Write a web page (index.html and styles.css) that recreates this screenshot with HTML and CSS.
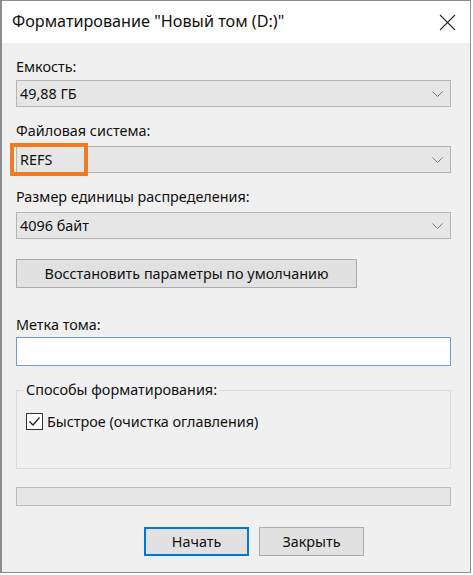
FILE: index.html
```html
<!DOCTYPE html>
<html lang="ru">
<head>
<meta charset="utf-8">
<title>Форматирование</title>
<link rel="stylesheet" href="styles.css">
</head>
<body>
<div class="window">
  <div class="titlebar">
    <span class="title">Форматирование "Новый том (D:)"</span>
    <svg class="close" width="17" height="17" viewBox="0 0 17 17"><path d="M1 1 L16 16 M16 1 L1 16" stroke="#2b2b2b" stroke-width="1.1" fill="none"/></svg>
  </div>
  <div class="content">
    <div class="label l1">Емкость:</div>
    <div class="combo c1"><span>49,88 ГБ</span><svg class="chev" width="11" height="6" viewBox="0 0 11 6"><path d="M0.5 0.5 L5.5 5.5 L10.5 0.5" stroke="#7a7a7a" fill="none"/></svg></div>

    <div class="label l2">Файловая система:</div>
    <div class="combo c2"><span>REFS</span><svg class="chev" width="11" height="6" viewBox="0 0 11 6"><path d="M0.5 0.5 L5.5 5.5 L10.5 0.5" stroke="#7a7a7a" fill="none"/></svg><div class="highlight"></div></div>

    <div class="label l2">Размер единицы распределения:</div>
    <div class="combo c2"><span>4096 байт</span><svg class="chev" width="11" height="6" viewBox="0 0 11 6"><path d="M0.5 0.5 L5.5 5.5 L10.5 0.5" stroke="#7a7a7a" fill="none"/></svg></div>

    <div class="btn restore">Восстановить параметры по умолчанию</div>

    <div class="label l4">Метка тома:</div>
    <div class="input"></div>

    <fieldset class="group">
      <legend>Способы форматирования:</legend>
      <div class="check-row">
        <span class="checkbox"><svg width="15" height="15" viewBox="0 0 15 15"><path d="M2.5 7.5 L6 11 L12.5 3.5" stroke="#222" stroke-width="1.3" fill="none"/></svg></span>
        <span>Быстрое (очистка оглавления)</span>
      </div>
    </fieldset>

    <div class="progress"></div>

    <div class="actions">
      <div class="btn action primary">Начать</div>
      <div class="btn action">Закрыть</div>
    </div>
  </div>
</div>
</body>
</html>
```
FILE: styles.css
```css
html, body {
  margin: 0;
  padding: 0;
  background: #ffffff;
}
body {
  font-family: "Noto Sans", "Open Sans", sans-serif;
  font-size: 14.4px;
  color: #111;
}
.window {
  width: 471px;
  height: 573px;
  box-sizing: border-box;
  border: 1px solid #8c8c8c;
  border-left: 2px solid #8c8c8c;
  background: #f0f0f0;
  display: flex;
  flex-direction: column;
}
.titlebar {
  height: 42px;
  flex: none;
  background: #ffffff;
  display: flex;
  align-items: center;
  justify-content: space-between;
  padding: 0 14px 0 10px;
}
.title {
  font-size: 16.2px;
  color: #111;
  position: relative;
  top: -1px;
}
.close {
  position: relative;
  top: 0px;
}
.content {
  padding: 0 19px 0 14px;
  display: flex;
  flex-direction: column;
}
.label {
  height: 20px;
  line-height: 20px;
}
.l1 { margin-top: 14px; }
.l2 { margin-top: 14px; }
.l4 { margin-top: 27px; }
.combo {
  position: relative;
  height: 27px;
  box-sizing: border-box;
  border: 1px solid #b4b4b4;
  background: #e6e6e6;
  display: flex;
  align-items: center;
  justify-content: space-between;
  padding: 0 7px 0 3px;
}
.c1 { margin-top: 3px; }
.c2 { margin-top: 5px; }
.chev { flex: none; }
.highlight {
  position: absolute;
  left: -7px;
  top: -4px;
  width: 78px;
  height: 33px;
  box-sizing: border-box;
  border: 4px solid #f07b22;
}
.btn {
  box-sizing: border-box;
  border: 1px solid #adadad;
  background: #e1e1e1;
  display: flex;
  align-items: center;
  justify-content: center;
}
.restore {
  margin-top: 20px;
  width: 341px;
  height: 29px;
}
.input {
  margin-top: 2px;
  height: 29px;
  box-sizing: border-box;
  border: 1px solid #6f9fd0;
  background: #ffffff;
}
.group {
  margin: 14px 0 0 0;
  padding: 0 7px 0 7px;
  height: 89px;
  box-sizing: border-box;
  border: 1px solid #dcdcdc;
  min-width: 0;
}
.group legend {
  padding: 0 2px;
  line-height: 20px;
}
.check-row {
  display: flex;
  align-items: center;
  gap: 4px;
  margin-top: 12px;
  padding-left: 2px;
}
.checkbox {
  width: 17px;
  height: 17px;
  box-sizing: border-box;
  border: 1px solid #333;
  background: #ffffff;
  display: flex;
  align-items: center;
  justify-content: center;
}
.progress {
  margin-top: 18px;
  height: 19px;
  box-sizing: border-box;
  border: 1px solid #bcbcbc;
  background: #e6e6e6;
}
.actions {
  margin-top: 21px;
  display: flex;
  justify-content: flex-start;
  gap: 10px;
  padding-left: 128px;
}
.action {
  width: 105px;
  height: 29px;
}
.primary {
  border: 2px solid #0078d7;
}
```
